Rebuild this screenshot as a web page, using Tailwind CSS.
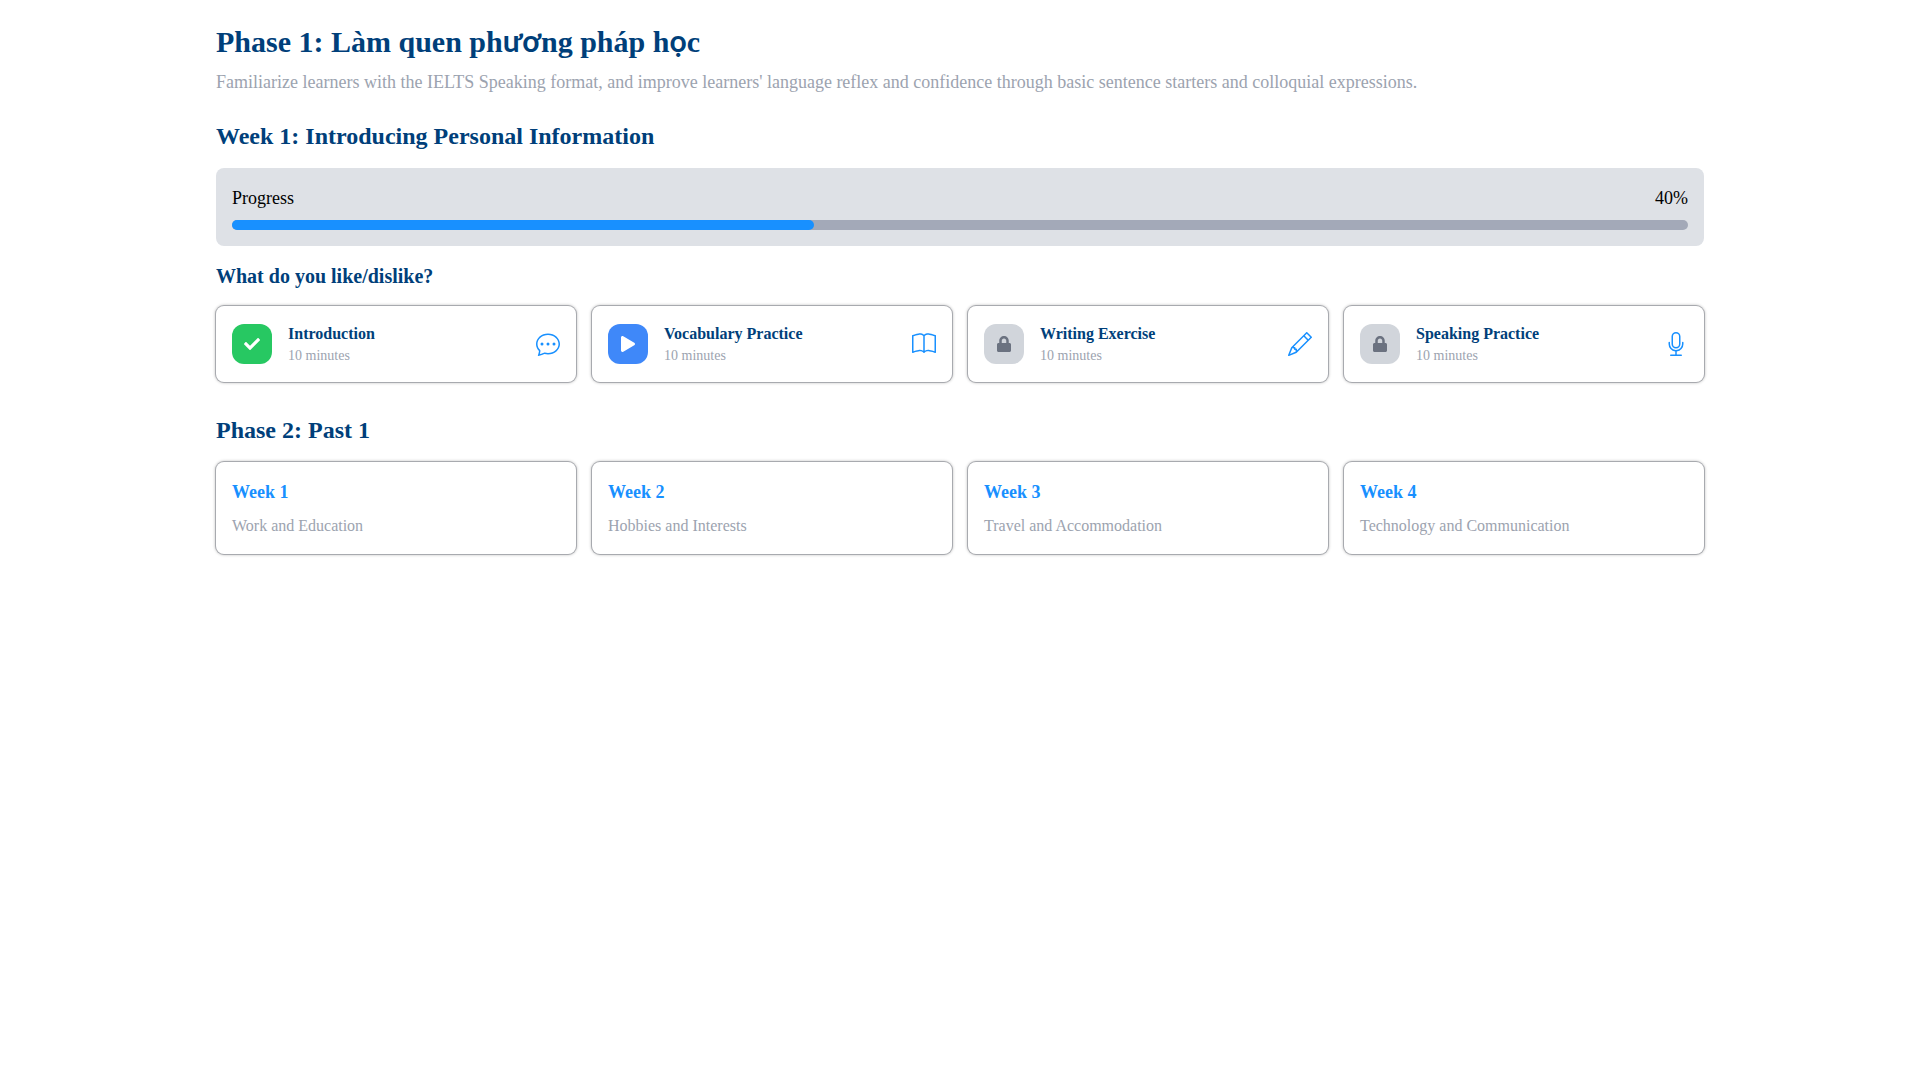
<!DOCTYPE html>
<html lang="vi">
<head>
<meta charset="utf-8">
<title>Phase 1</title>
<script src="https://cdn.jsdelivr.net/npm/@tailwindcss/browser@4"></script>
</head>
<body class="bg-white font-['Liberation_Serif',serif] text-black">
<main class="mx-auto max-w-[1536px] px-6 py-6">
  <h1 class="h-9 text-3xl leading-9 font-bold text-[#003f7a]">Phase 1: Làm quen ph<span class="font-['Lato',sans-serif] leading-none">ươ</span>ng pháp h<span class="font-['Lato',sans-serif] leading-none">ọ</span>c</h1>
  <p class="mt-2 text-lg leading-7 text-[#9ca3af]">Familiarize learners with the IELTS Speaking format, and improve learners' language reflex and confidence through basic sentence starters and colloquial expressions.</p>
  <h2 class="mt-6 text-2xl leading-8 font-bold text-[#003f7a]">Week 1: Introducing Personal Information</h2>
  <section class="mt-4 rounded-lg bg-[#dee1e6] p-4">
    <div class="flex justify-between text-lg leading-7"><span>Progress</span><span>40%</span></div>
    <div class="mt-2 h-2.5 rounded-full bg-[#a3a9b8]"><div class="h-full w-2/5 rounded-full bg-[#1890ff]"></div></div>
  </section>
  <h3 class="mt-4 text-xl leading-7 font-bold text-[#003f7a]">What do you like/dislike?</h3>
  <div class="mt-4 grid grid-cols-4 gap-4">
    <div class="flex items-center rounded-lg p-4 shadow-[0_0_0_1px_#a8aaaf,0_0_3px_1px_rgba(0,0,0,0.25)] bg-white">
      <div class="flex size-10 shrink-0 items-center justify-center rounded-xl bg-[#27c862]">
        <svg class="size-4" viewBox="0 0 512 512" fill="#fff"><path d="M173.898 439.404l-166.4-166.4c-9.997-9.997-9.997-26.206 0-36.204l36.203-36.204c9.997-9.998 26.207-9.998 36.204 0L192 312.69 432.095 72.596c9.997-9.997 26.207-9.997 36.204 0l36.203 36.204c9.997 9.997 9.997 26.206 0 36.204l-294.4 294.401c-9.998 9.997-26.207 9.997-36.204-.001z"/></svg>
      </div>
      <div class="ml-4 flex-1"><div class="text-base leading-6 font-bold text-[#003f7a]">Introduction</div><div class="text-sm leading-5 text-[#9ca3af]">10 minutes</div></div>
      <svg class="size-6 shrink-0" viewBox="0 0 16 16" fill="#1890ff"><path d="M5 8a1 1 0 1 1-2 0 1 1 0 0 1 2 0zm4 0a1 1 0 1 1-2 0 1 1 0 0 1 2 0zm3 1a1 1 0 1 0 0-2 1 1 0 0 0 0 2z"/><path d="m2.165 15.803.02-.004c1.83-.363 2.948-.842 3.468-1.105A9.06 9.06 0 0 0 8 15c4.418 0 8-3.134 8-7s-3.582-7-8-7-8 3.134-8 7c0 1.76.743 3.37 1.97 4.6a10.437 10.437 0 0 1-.524 2.318l-.003.011a10.722 10.722 0 0 1-.244.637c-.079.186.074.394.273.362a21.673 21.673 0 0 0 .693-.125zm.8-3.108a1 1 0 0 0-.287-.801C1.618 10.83 1 9.468 1 8c0-3.192 3.004-6 7-6s7 2.808 7 6c0 3.193-3.004 6-7 6a8.06 8.06 0 0 1-2.088-.272 1 1 0 0 0-.711.074c-.387.196-1.24.57-2.634.893a10.97 10.97 0 0 0 .398-2z"/></svg>
    </div>
    <div class="flex items-center rounded-lg p-4 shadow-[0_0_0_1px_#a8aaaf,0_0_3px_1px_rgba(0,0,0,0.25)] bg-white">
      <div class="flex size-10 shrink-0 items-center justify-center rounded-xl bg-[#3f88f9]">
        <svg class="h-4 w-3.5" viewBox="0 0 448 512" fill="#fff"><path d="M424.4 214.7L72.4 6.6C43.8-10.3 0 6.1 0 47.9V464c0 37.5 40.7 60.1 72.4 41.3l352-208c31.4-18.5 31.5-64.1 0-82.6z"/></svg>
      </div>
      <div class="ml-4 flex-1"><div class="text-base leading-6 font-bold text-[#003f7a]">Vocabulary Practice</div><div class="text-sm leading-5 text-[#9ca3af]">10 minutes</div></div>
      <svg class="size-6 shrink-0" viewBox="0 0 16 16" fill="#1890ff"><path d="M1 2.828c.885-.37 2.154-.769 3.388-.893 1.33-.134 2.458.063 3.112.752v9.746c-.935-.53-2.12-.603-3.213-.493-1.18.12-2.37.461-3.287.811V2.828zm7.5-.141c.654-.689 1.782-.886 3.112-.752 1.234.124 2.503.523 3.388.893v9.923c-.918-.35-2.107-.692-3.287-.81-1.094-.111-2.278-.039-3.213.492V2.687zM8 1.783C7.015.936 5.587.81 4.287.94c-1.514.153-3.042.672-3.994 1.105A.5.5 0 0 0 0 2.5v11a.5.5 0 0 0 .707.455c.882-.4 2.303-.881 3.68-1.02 1.409-.142 2.59.087 3.223.877a.5.5 0 0 0 .78 0c.633-.79 1.814-1.019 3.222-.877 1.378.139 2.8.62 3.681 1.02A.5.5 0 0 0 16 13.5v-11a.5.5 0 0 0-.293-.455c-.952-.433-2.48-.952-3.994-1.105C10.413.809 8.985.936 8 1.783z"/></svg>
    </div>
    <div class="flex items-center rounded-lg p-4 shadow-[0_0_0_1px_#a8aaaf,0_0_3px_1px_rgba(0,0,0,0.25)] bg-white">
      <div class="flex size-10 shrink-0 items-center justify-center rounded-xl bg-[#d1d5db]">
        <svg class="h-4 w-3.5" viewBox="0 0 448 512" fill="#6b7280"><path d="M400 224h-24v-72C376 68.2 307.8 0 224 0S72 68.2 72 152v72H48c-26.5 0-48 21.5-48 48v192c0 26.5 21.5 48 48 48h352c26.5 0 48-21.5 48-48V272c0-26.5-21.5-48-48-48zm-104 0H152v-72c0-39.7 32.3-72 72-72s72 32.3 72 72v72z"/></svg>
      </div>
      <div class="ml-4 flex-1"><div class="text-base leading-6 font-bold text-[#003f7a]">Writing Exercise</div><div class="text-sm leading-5 text-[#9ca3af]">10 minutes</div></div>
      <svg class="size-6 shrink-0" viewBox="0 0 16 16" fill="#1890ff"><path d="M12.146.146a.5.5 0 0 1 .708 0l3 3a.5.5 0 0 1 0 .708l-10 10a.5.5 0 0 1-.168.11l-5 2a.5.5 0 0 1-.65-.65l2-5a.5.5 0 0 1 .11-.168l10-10zM11.207 2.5 13.5 4.793 14.793 3.5 12.5 1.207 11.207 2.5zm1.586 3L10.5 3.207 4 9.707V10h.5a.5.5 0 0 1 .5.5v.5h.5a.5.5 0 0 1 .5.5v.5h.293l6.5-6.5zm-9.761 5.175-.106.106-1.528 3.821 3.821-1.528.106-.106A.5.5 0 0 1 5 12.5V12h-.5a.5.5 0 0 1-.5-.5V11h-.5a.5.5 0 0 1-.468-.325z"/></svg>
    </div>
    <div class="flex items-center rounded-lg p-4 shadow-[0_0_0_1px_#a8aaaf,0_0_3px_1px_rgba(0,0,0,0.25)] bg-white">
      <div class="flex size-10 shrink-0 items-center justify-center rounded-xl bg-[#d1d5db]">
        <svg class="h-4 w-3.5" viewBox="0 0 448 512" fill="#6b7280"><path d="M400 224h-24v-72C376 68.2 307.8 0 224 0S72 68.2 72 152v72H48c-26.5 0-48 21.5-48 48v192c0 26.5 21.5 48 48 48h352c26.5 0 48-21.5 48-48V272c0-26.5-21.5-48-48-48zm-104 0H152v-72c0-39.7 32.3-72 72-72s72 32.3 72 72v72z"/></svg>
      </div>
      <div class="ml-4 flex-1"><div class="text-base leading-6 font-bold text-[#003f7a]">Speaking Practice</div><div class="text-sm leading-5 text-[#9ca3af]">10 minutes</div></div>
      <svg class="size-6 shrink-0" viewBox="0 0 16 16" fill="#1890ff"><path d="M3.5 6.5A.5.5 0 0 1 4 7v1a4 4 0 0 0 8 0V7a.5.5 0 0 1 1 0v1a5 5 0 0 1-4.5 4.975V15h3a.5.5 0 0 1 0 1h-7a.5.5 0 0 1 0-1h3v-2.025A5 5 0 0 1 3 8V7a.5.5 0 0 1 .5-.5z"/><path d="M10 8a2 2 0 1 1-4 0V3a2 2 0 1 1 4 0v5zM8 0a3 3 0 0 0-3 3v5a3 3 0 0 0 6 0V3a3 3 0 0 0-3-3z"/></svg>
    </div>
  </div>
  <h2 class="mt-8 text-2xl leading-8 font-bold text-[#003f7a]">Phase 2: Past 1</h2>
  <div class="mt-4 grid grid-cols-4 gap-4">
    <div class="rounded-lg p-4 shadow-[0_0_0_1px_#a8aaaf,0_0_3px_1px_rgba(0,0,0,0.25)] bg-white"><div class="text-lg leading-7 font-bold text-[#1890ff]">Week 1</div><div class="mt-2 text-base leading-6 text-[#9ca3af]">Work and Education</div></div>
    <div class="rounded-lg p-4 shadow-[0_0_0_1px_#a8aaaf,0_0_3px_1px_rgba(0,0,0,0.25)] bg-white"><div class="text-lg leading-7 font-bold text-[#1890ff]">Week 2</div><div class="mt-2 text-base leading-6 text-[#9ca3af]">Hobbies and Interests</div></div>
    <div class="rounded-lg p-4 shadow-[0_0_0_1px_#a8aaaf,0_0_3px_1px_rgba(0,0,0,0.25)] bg-white"><div class="text-lg leading-7 font-bold text-[#1890ff]">Week 3</div><div class="mt-2 text-base leading-6 text-[#9ca3af]">Travel and Accommodation</div></div>
    <div class="rounded-lg p-4 shadow-[0_0_0_1px_#a8aaaf,0_0_3px_1px_rgba(0,0,0,0.25)] bg-white"><div class="text-lg leading-7 font-bold text-[#1890ff]">Week 4</div><div class="mt-2 text-base leading-6 text-[#9ca3af]">Technology and Communication</div></div>
  </div>
</main>
</body>
</html>
